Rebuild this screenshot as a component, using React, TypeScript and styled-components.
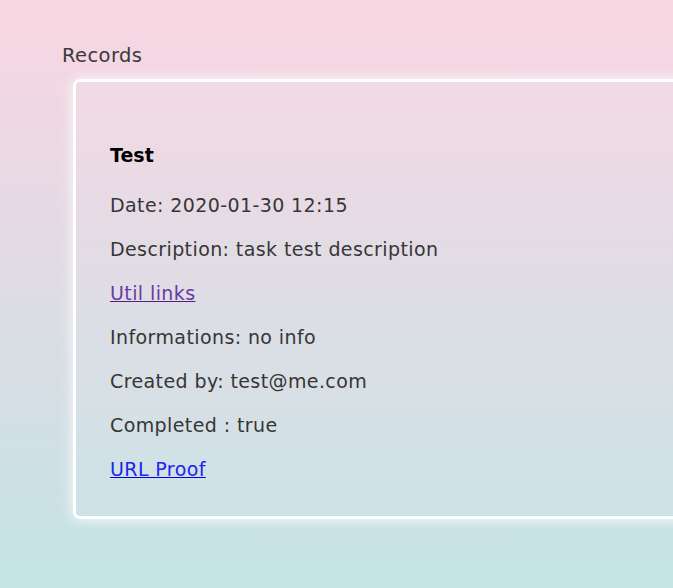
import React from 'react';
import styled, { createGlobalStyle } from 'styled-components';

const GlobalStyle = createGlobalStyle`
    html, body {
        margin: 0;
        padding: 0;
    }
    body {
        min-height: 588px;
        background: linear-gradient(180deg, #f9d6e2 0%, #e6dae4 35%, #d3dfe4 70%, #c4e4e6 100%);
        font-family: 'DejaVu Sans', 'Open Sans', sans-serif;
        overflow: hidden;
    }
`;

const Page = styled.div`
    display: flex;
    flex-direction: column;
    width: 740px;
    padding: 44px 0 0 62px;
    box-sizing: border-box;
`;

const Title = styled.h2`
    margin: 0 0 11px;
    font-size: 19.5px;
    font-weight: 400;
    letter-spacing: 0.4px;
    color: #3a3a3a;
    line-height: 24px;
`;

const Card = styled.div`
    display: flex;
    flex-direction: column;
    margin-left: 11px;
    padding: 62px 34px 34px;
    border: 3px solid #ffffff;
    border-radius: 7px;
    box-shadow: 0 0 14px rgba(255, 255, 255, 0.9);
    background: rgba(255, 255, 255, 0.05);
`;

const Name = styled.h3`
    margin: 0 0 26px;
    font-size: 19px;
    font-weight: 700;
    line-height: 22px;
    color: #000;
`;

const Field = styled.p`
    margin: 0 0 18px;
    font-size: 19px;
    letter-spacing: 0.4px;
    line-height: 26px;
    color: #363636;
    font-weight: 400;

    &:last-child {
        margin-bottom: 0;
    }
`;

const Link = styled.a<{ $visited?: boolean }>`
    color: ${props => (props.$visited ? '#6a3ba0' : '#2323ee')};
    text-decoration: underline;
    text-decoration-color: ${props => (props.$visited ? '#551a8b' : '#0000ee')};
`;

const App = () => {
    return (
        <>
            <GlobalStyle />
            <Page>
                <Title>Records</Title>
                <Card>
                    <Name>Test</Name>
                    <Field>Date: 2020-01-30 12:15</Field>
                    <Field>Description: task test description</Field>
                    <Field>
                        <Link $visited href="#">
                            Util links
                        </Link>
                    </Field>
                    <Field>Informations: no info</Field>
                    <Field>Created by: test@me.com</Field>
                    <Field>Completed : true</Field>
                    <Field>
                        <Link href="#">URL Proof</Link>
                    </Field>
                </Card>
            </Page>
        </>
    );
};

export default App;
